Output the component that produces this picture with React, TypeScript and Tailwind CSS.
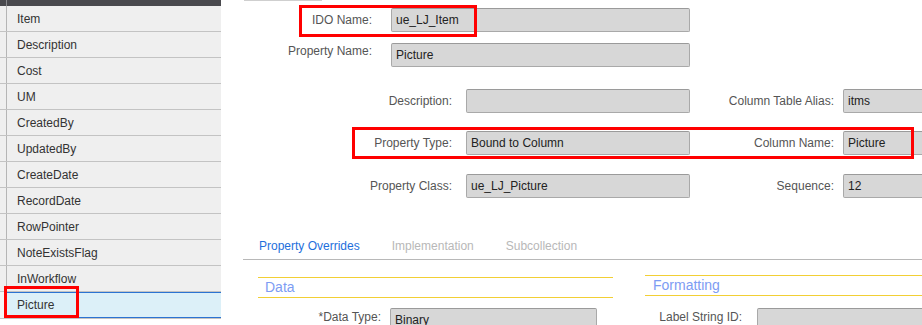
const properties = [
  'Item',
  'Description',
  'Cost',
  'UM',
  'CreatedBy',
  'UpdatedBy',
  'CreateDate',
  'RecordDate',
  'RowPointer',
  'NoteExistsFlag',
  'InWorkflow',
];

function Field({ value, className = '' }: { value?: string; className?: string }) {
  return (
    <div
      className={`flex-none h-[24px] flex items-center pl-[4px] bg-[#d7d7d7] border border-[#a9a9a9] border-t-[#9a9a9a] rounded-[2px] text-[12px] text-[#222] whitespace-nowrap overflow-hidden ${className}`}
    >
      {value}
    </div>
  );
}

function Label({ text, className = '' }: { text: string; className?: string }) {
  return <div className={`text-right text-[12px] leading-[16px] text-[#555] whitespace-nowrap flex-none ${className}`}>{text}</div>;
}

export default function App() {
  return (
    <div className="relative w-[922px] h-[325px] overflow-hidden bg-white flex font-['Liberation_Sans',Arial,sans-serif]">
      {/* property list */}
      <aside className="w-[221px] flex-none flex flex-col self-start">
        <div className="h-[6px] shrink-0 bg-[#4a4a4e] flex">
          <div className="w-[7px] border-r border-[#8a8a8e]" />
        </div>
        {properties.map((name) => (
          <div key={name} className="h-[26px] shrink-0 flex bg-[#efefef] border-b border-[#c3c3c3]">
            <div className="w-[7px] flex-none border-r border-[#b5b5b5]" />
            <div className="flex items-center pl-[10px] text-[12px] text-[#333]">{name}</div>
          </div>
        ))}
        <div className="h-[27px] shrink-0 flex border-b border-[#c3c3c3]">
          <div className="w-[7px] flex-none bg-[#f4f4f4] border-r border-[#b5b5b5]" />
          <div className="flex-1 flex items-center pl-[10px] text-[12px] text-[#333] bg-[#dcf0f8] border-y border-[#2b73d2]">
            Picture
          </div>
        </div>
      </aside>

      {/* property details */}
      <main className="flex-1 flex flex-col overflow-hidden">
        <div className="shrink-0 ml-[23px] w-[78px] h-px bg-[#cfcfcf]" />

        <div className="shrink-0 mt-[7px] flex items-center">
          <Label text="IDO Name:" className="w-[151px]" />
          <Field value="ue_LJ_Item" className="ml-[19px] w-[299px]" />
        </div>

        <div className="shrink-0 mt-[11px] flex items-start">
          <Label text="Property Name:" className="w-[151px]" />
          <Field value="Picture" className="ml-[19px] w-[299px]" />
        </div>

        <div className="shrink-0 mt-[22px] flex items-center">
          <Label text="Description:" className="w-[231px]" />
          <Field className="ml-[14px] w-[224px]" />
          <Label text="Column Table Alias:" className="w-[144px]" />
          <Field value="itms" className="ml-[9px] w-[120px]" />
        </div>

        <div className="shrink-0 mt-[18px] flex items-center">
          <Label text="Property Type:" className="w-[231px]" />
          <Field value="Bound to Column" className="ml-[14px] w-[224px]" />
          <Label text="Column Name:" className="w-[144px]" />
          <Field value="Picture" className="ml-[9px] w-[120px]" />
        </div>

        <div className="shrink-0 mt-[19px] flex items-center">
          <Label text="Property Class:" className="w-[231px]" />
          <Field value="ue_LJ_Picture" className="ml-[14px] w-[224px]" />
          <Label text="Sequence:" className="w-[144px]" />
          <Field value="12" className="ml-[9px] w-[120px]" />
        </div>

        {/* tabs */}
        <div className="shrink-0 mt-[34px] ml-[22px] h-[28px] flex items-center border-b border-[#b8b8b8] text-[12px]">
          <div className="px-[16px] text-[#1e6fdc]">Property Overrides</div>
          <div className="px-[16px] text-[#b8b8b8]">Implementation</div>
          <div className="px-[16px] text-[#b8b8b8]">Subcollection</div>
        </div>

        <div className="shrink-0 flex items-start">
          {/* Data group */}
          <div className="ml-[37px] w-[355px] flex-none flex flex-col">
            <div className="shrink-0 mt-[17px] h-[21px] flex items-center pl-[7px] border-t border-b border-t-[#f2cf35] border-b-[#f2cf35] text-[14px] text-[#7d9cf3]">
              Data
            </div>
            <div className="shrink-0 mt-[10px] flex items-start">
              <Label text="*Data Type:" className="w-[123px] mt-[1px]" />
              <Field value="Binary" className="ml-[9px] w-[207px]" />
            </div>
          </div>

          {/* Formatting group */}
          <div className="ml-[32px] flex-1 flex flex-col">
            <div className="shrink-0 mt-[15px] h-[21px] flex items-center pl-[8px] border-t border-b border-t-[#f2cf35] border-b-[#f2cf35] text-[14px] text-[#7d9cf3]">
              Formatting
            </div>
            <div className="shrink-0 mt-[12px] flex items-start">
              <Label text="Label String ID:" className="w-[97px] mt-[1px]" />
              <Field className="ml-[15px] w-[200px]" />
            </div>
          </div>
        </div>
      </main>

      {/* annotation boxes */}
      <div className="absolute left-[299px] top-[5px] w-[178px] h-[32px] border-[3px] border-[#f00]" />
      <div className="absolute left-[352px] top-[127px] w-[562px] h-[32px] border-[3px] border-[#f00]" />
      <div className="absolute left-[4px] top-[286px] w-[75px] h-[32px] border-[3px] border-[#f00]" />
    </div>
  );
}
